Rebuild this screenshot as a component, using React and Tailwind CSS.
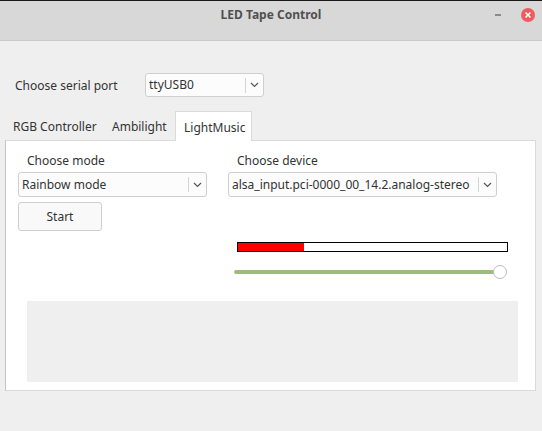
import { useState } from 'react'

function Chevron() {
  return (
    <svg width="9" height="6" viewBox="0 0 9 6" className="shrink-0">
      <path d="M1 1 L4.5 4.5 L8 1" fill="none" stroke="#555" strokeWidth="1.2" />
    </svg>
  )
}

function Combo({ value, className }) {
  return (
    <div className={`flex items-center bg-[#fcfcfc] border border-[#cfcfcf] rounded-[3px] ${className}`}>
      <span className="flex-1 pl-[3px] truncate">{value}</span>
      <span className="w-px h-[15px] bg-[#d4d4d4]" />
      <span className="w-[17px] flex justify-center">
        <Chevron />
      </span>
    </div>
  )
}

export default function App() {
  const [level] = useState(0.245)
  const tabs = [
    { name: 'RGB Controller', w: 'w-[99px]' },
    { name: 'Ambilight', w: 'w-[71px]' },
    { name: 'LightMusic', w: 'w-[77px]' },
  ]
  const active = 'LightMusic'

  return (
    <div className="w-[542px] h-[431px] bg-[#efefef] text-[#333] text-[12px] overflow-hidden" style={{ fontFamily: '"Noto Sans", sans-serif' }}>
      {/* title bar */}
      <div className="h-[41px] bg-[#d8d8d8] border-t border-[#1a1a1a] border-b border-b-[#c9c9c9] flex items-center relative">
        <div className="w-full text-center font-bold text-[#505050] -mt-[12px]">LED Tape Control</div>
        <span className="absolute left-[495px] top-[13px] w-[6px] h-[2px] bg-[#8a8a8a]" />
        <span className="absolute left-[521px] top-[7px] w-[14px] h-[14px] rounded-full bg-[#ef5a5f] flex items-center justify-center">
          <svg width="8" height="8" viewBox="0 0 8 8">
            <path d="M1.5 1.5 L6.5 6.5 M6.5 1.5 L1.5 6.5" stroke="#fff" strokeWidth="1.6" />
          </svg>
        </span>
      </div>

      {/* serial port */}
      <div className="flex items-center mt-[32px] h-[24px]">
        <span className="ml-[15px] w-[130px] pt-[1px]">Choose serial port</span>
        <Combo value="ttyUSB0" className="w-[119px] h-[24px]" />
      </div>

      {/* tabs */}
      <div className="flex mt-[14px] ml-[5px] h-[29px] items-end">
        {tabs.map(t => (
          <div
            key={t.name}
            className={`${t.w} h-[29px] flex items-center pl-[8px] pt-[3px] ${
              t.name === active ? 'bg-white border border-b-0 border-[#dadada] -mb-px h-[30px] relative z-10' : ''
            }`}
          >
            {t.name}
          </div>
        ))}
      </div>

      {/* pane */}
      <div className="ml-[5px] w-[531px] h-[251px] bg-white border border-[#dadada] border-l-[#c4c4c4]">
        <div className="flex pt-[11px]">
          <div className="ml-[12px] w-[189px] flex flex-col">
            <div className="h-[18px] leading-[18px] pl-[9px]">Choose mode</div>
            <Combo value="Rainbow mode" className="mt-[2px] h-[25px]" />
            <button className="mt-[5px] w-[84px] h-[29px] bg-[#f9f9f9] border border-[#cfcfcf] rounded-[3px] text-[#333]">
              Start
            </button>
          </div>

          <div className="ml-[21px] flex flex-col">
            <div className="h-[18px] leading-[18px] pl-[9px]">Choose device</div>
            <Combo value="alsa_input.pci-0000_00_14.2.analog-stereo" className="mt-[2px] h-[25px] w-[269px]" />
            <div className="mt-[45px] ml-[9px] w-[271px] h-[10px] border border-black bg-white">
              <div className="h-full bg-[#ff0000]" style={{ width: `${level * 100}%` }} />
            </div>
            <div className="mt-[13px] ml-[6px] w-[274px] h-[14px] flex items-center relative">
              <div className="w-[262px] h-[4px] rounded-full bg-[#9dbb7c]" />
              <span className="absolute left-[259px] top-0 w-[14px] h-[14px] rounded-full bg-white border border-[#bdbdbd]" />
            </div>
          </div>
        </div>

        <div className="mt-[22px] ml-[21px] w-[491px] h-[81px] bg-[#efefef]" />
      </div>
    </div>
  )
}
